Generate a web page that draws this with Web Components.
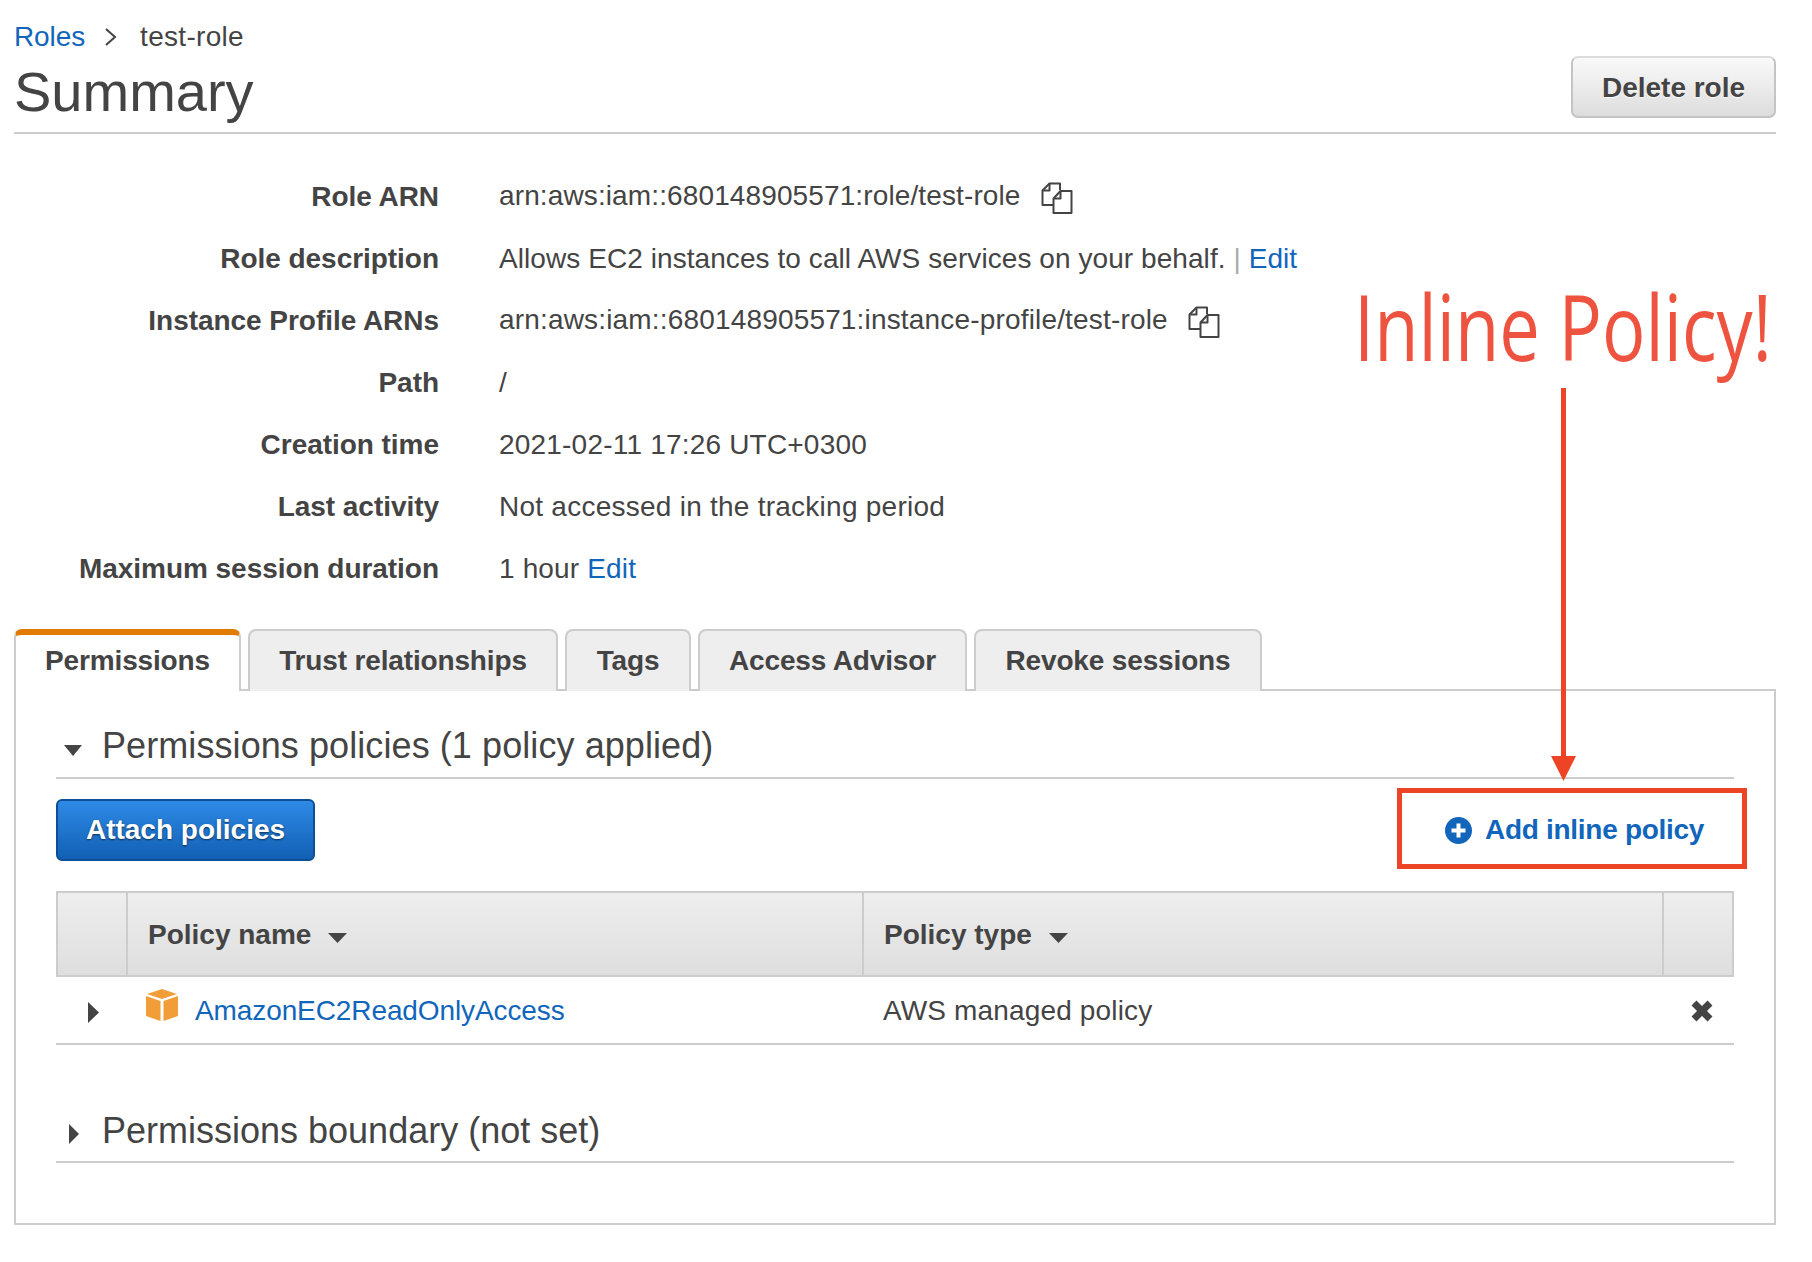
<!DOCTYPE html>
<html>
<head>
<meta charset="utf-8">
<title>Summary</title>
<style>
    html, body { margin: 0; background: #fff; }
    body { font: 28px "Liberation Sans", Arial, sans-serif; color: #444; }
</style>
</head>
<body>
<role-page>
    <page-header slot="header" role-name="test-role"></page-header>
    <info-list slot="info">
        <info-row label="Role ARN" spacing=".12">arn:aws:iam::680148905571:role/test-role<copy-icon></copy-icon></info-row>
        <info-row label="Role description" spacing=".07">Allows EC2 instances to call AWS services on your behalf. <span style="color:#aaa">|</span> <a href="#" style="color:#1166bb;text-decoration:none">Edit</a></info-row>
        <info-row label="Instance Profile ARNs" spacing=".17">arn:aws:iam::680148905571:instance-profile/test-role<copy-icon></copy-icon></info-row>
        <info-row label="Path">/</info-row>
        <info-row label="Creation time" spacing=".2">2021-02-11 17:26 UTC+0300</info-row>
        <info-row label="Last activity" spacing=".25">Not accessed in the tracking period</info-row>
        <info-row label="Maximum session duration">1 hour <a href="#" style="color:#1166bb;text-decoration:none">Edit</a></info-row>
    </info-list>
    <tab-bar slot="tabs"></tab-bar>
    <tab-panel slot="panel">
        <policy-section title="Permissions policies (1 policy applied)" open></policy-section>
        <policy-toolbar></policy-toolbar>
        <policy-table></policy-table>
        <policy-section class="boundary" title="Permissions boundary (not set)"></policy-section>
    </tab-panel>
    <inline-callout slot="callout"></inline-callout>
</role-page>

<script>
class RolePage extends HTMLElement {
    constructor() {
        super();
        this.attachShadow({ mode: 'open' });
        this.shadowRoot.innerHTML = `
            <style>
                :host { display: block; position: relative; height: 1262px; box-sizing: border-box; padding: 0 36px 0 14px; overflow: hidden; }
                .tabs-wrap { margin-top: 29px; }
            </style>
            <slot name="header"></slot>
            <slot name="info"></slot>
            <div class="tabs-wrap"><slot name="tabs"></slot><slot name="panel"></slot></div>
            <slot name="callout"></slot>
        `;
    }
}

class PageHeader extends HTMLElement {
    constructor() {
        super();
        this.attachShadow({ mode: 'open' });
    }

    connectedCallback() {
        const name = this.getAttribute('role-name');
        this.shadowRoot.innerHTML = `
            <style>
                :host { display: block; height: 132px; border-bottom: 2px solid #ccc; }
                .crumbs { display: flex; align-items: center; height: 36px; padding-top: 19px; line-height: 36px; }
                .crumbs a { color: #1166bb; text-decoration: none; letter-spacing: -.1px; }
                .crumbs span { letter-spacing: .3px; }
                .crumbs svg { margin: 0 22px 0 19px; display: block; }
                .title { display: flex; justify-content: space-between; align-items: flex-start; }
                h1 { margin: 5px 0 0; font-size: 56px; font-weight: 400; line-height: 64px; }
                button {
                    width: 205px; height: 62px; margin-top: 1px; box-sizing: border-box; padding: 2px 0 0;
                    font: bold 28px "Liberation Sans", Arial, sans-serif; color: #444;
                    text-shadow: 0 1px 1px rgba(255,255,255,.8);
                    border: 2px solid #c4c4c4; border-top-color: #dcdcdc; border-radius: 7px;
                    background: linear-gradient(#f9f9f9, #dddddd);
                }
            </style>
            <div class="crumbs">
                <a href="#">Roles</a>
                <svg width="14" height="20" viewBox="0 0 14 20"><path d="M2 2l9 8-9 8" fill="none" stroke="#444" stroke-width="2"/></svg>
                <span>${name}</span>
            </div>
            <div class="title">
                <h1>Summary</h1>
                <button>Delete role</button>
            </div>
        `;
    }
}

class InfoList extends HTMLElement {
    constructor() {
        super();
        this.attachShadow({ mode: 'open' });
        this.shadowRoot.innerHTML = `
            <style>:host { display: block; padding-top: 32px; }</style>
            <slot></slot>
        `;
    }
}

class InfoRow extends HTMLElement {
    constructor() {
        super();
        this.attachShadow({ mode: 'open' });
    }

    connectedCallback() {
        const spacing = this.getAttribute('spacing') || '.15';
        this.shadowRoot.innerHTML = `
            <style>
                :host { display: grid; grid-template-columns: 425px 1fr; column-gap: 60px; height: 62px; align-items: center; }
                .label { font-weight: bold; text-align: right; letter-spacing: -.04px; }
                .value { letter-spacing: ${spacing}px; }
            </style>
            <div class="label">${this.getAttribute('label')}</div>
            <div class="value"><slot></slot></div>
        `;
    }
}

class CopyIcon extends HTMLElement {
    constructor() {
        super();
        this.attachShadow({ mode: 'open' });
        this.shadowRoot.innerHTML = `
            <style>:host { display: inline-block; width: 32px; height: 32px; margin-left: 20px; vertical-align: -9px; }</style>
            <svg width="32" height="32" viewBox="0 0 32 32" fill="none" stroke="#444" stroke-width="2" stroke-linejoin="round">
                <path d="M13 23H1.500V8.500L8.500 1.500H19V8"/>
                <path d="M8.500 1.500V8.500H1.500"/>
                <path d="M12.500 16.500L19.500 9H30.500V31H12.500Z"/>
                <path d="M19.500 9V16.500H12.500"/>
            </svg>
        `;
    }
}

class TabBar extends HTMLElement {
    constructor() {
        super();
        this.attachShadow({ mode: 'open' });
        const tabs = [['Permissions', 227], ['Trust relationships', 310], ['Tags', 126], ['Access Advisor', 269], ['Revoke sessions', 288]];
        this.shadowRoot.innerHTML = `
            <style>
                :host { display: flex; gap: 7px; height: 62px; position: relative; z-index: 1; margin-bottom: -2px; letter-spacing: -.15px; }
                .tab {
                    box-sizing: border-box; height: 62px; font-weight: bold; text-align: center;
                    line-height: 59px; background: #eee; border: 2px solid #ccc; border-bottom: 0;
                    border-radius: 8px 8px 0 0;
                }
                .tab.active {
                    background: #fff; border-top: 6px solid #e07b00; line-height: 51px;
                }
            </style>
            ${tabs.map((t, i) => `<div class="tab${i === 0 ? ' active' : ''}" style="width:${t[1]}px">${t[0]}</div>`).join('')}
        `;
    }
}

class TabPanel extends HTMLElement {
    constructor() {
        super();
        this.attachShadow({ mode: 'open' });
        this.shadowRoot.innerHTML = `
            <style>:host { display: block; height: 536px; box-sizing: border-box; border: 2px solid #ccc; padding: 0 40px 0 40px; }</style>
            <slot></slot>
        `;
    }
}

class PolicySection extends HTMLElement {
    constructor() {
        super();
        this.attachShadow({ mode: 'open' });
    }

    connectedCallback() {
        const open = this.hasAttribute('open');
        const caret = open
            ? '<svg width="18" height="12" viewBox="0 0 18 12"><path d="M0 0h18L9 11z" fill="#444"/></svg>'
            : '<svg width="18" height="22" viewBox="0 0 18 22"><path d="M5 1l10 10L5 21z" fill="#444"/></svg>';
        const top = open ? 32 : 62;
        this.shadowRoot.innerHTML = `
            <style>
                :host { display: block; padding-top: ${top}px; }
                .head { display: flex; align-items: center; height: ${open ? 46 : 48}px; padding-bottom: ${open ? 8 : 6}px; border-bottom: 2px solid #ccc; font-size: 36px; }
                svg { margin-left: 8px; margin-top: ${open ? 10 : 6}px; flex: none; }
                span { margin-left: 20px; }
            </style>
            <div class="head">${caret}<span style="letter-spacing:${open ? .08 : 0}px">${this.getAttribute('title')}</span></div>
        `;
    }
}

class PolicyToolbar extends HTMLElement {
    constructor() {
        super();
        this.attachShadow({ mode: 'open' });
        this.shadowRoot.innerHTML = `
            <style>
                :host { display: flex; justify-content: space-between; align-items: center; height: 112px; box-sizing: border-box; padding-bottom: 10px; }
                button {
                    width: 259px; height: 62px; box-sizing: border-box; padding: 0;
                    font: bold 28px "Liberation Sans", Arial, sans-serif; color: #fff;
                    text-shadow: 0 1px 2px rgba(0,0,0,.6);
                    border: 2px solid #0d4f96; border-radius: 6px;
                    background: linear-gradient(#2e8ae6, #1160b4);
                }
                a { display: flex; align-items: center; gap: 13px; color: #1166bb; font-weight: bold; text-decoration: none; margin-right: 30px; letter-spacing: -.3px; }
                svg { display: block; margin-left: -1px; }
            </style>
            <button>Attach policies</button>
            <a href="#">
                <svg width="27" height="27" viewBox="0 0 27 27"><circle cx="13.500" cy="13.500" r="13.500" fill="#1166bb"/><path d="M13.500 6.500v14M6.500 13.500h14" stroke="#fff" stroke-width="4"/></svg>
                Add inline policy
            </a>
        `;
    }
}

class PolicyTable extends HTMLElement {
    constructor() {
        super();
        this.attachShadow({ mode: 'open' });
        const sortCaret = '<svg width="19" height="10" viewBox="0 0 19 10"><path d="M0 0h19L9.500 10z" fill="#444"/></svg>';
        this.shadowRoot.innerHTML = `
            <style>
                :host { display: block; }
                .row { display: grid; grid-template-columns: 70px 736px 800px 1fr; }
                .head {
                    height: 86px; box-sizing: border-box; border: 2px solid #ccc;
                    grid-template-columns: 68px 736px 800px 1fr;
                    background: linear-gradient(#eeeeee, #dedede); font-weight: bold;
                }
                .head > div { display: flex; align-items: center; gap: 17px; padding: 2px 0 0 20px; border-left: 2px solid #ccc; }
                .head > div:first-child { border-left: 0; padding: 0; }
                .head svg { margin-top: 6px; }
                .body { height: 68px; box-sizing: border-box; padding-top: 2px; border-bottom: 2px solid #ccc; align-items: center; }
                .body > div { display: flex; align-items: center; }
                .name { padding-left: 20px; letter-spacing: -.1px; }
                .name a { color: #1166bb; text-decoration: none; margin-left: 17px; }
                .type { padding-left: 21px; letter-spacing: .15px; }
                .box { margin-top: -12px; }
                .arrow { padding-left: 30px; margin-top: 2px; }
                .del { padding-left: 28px; }
            </style>
            <div class="row head">
                <div></div>
                <div>Policy name ${sortCaret}</div>
                <div>Policy type ${sortCaret}</div>
                <div></div>
            </div>
            <div class="row body">
                <div class="arrow"><svg width="14" height="21" viewBox="0 0 14 21"><path d="M2 0l11 10.500L2 21z" fill="#444"/></svg></div>
                <div class="name">
                    <svg class="box" width="32" height="32" viewBox="0 0 32 32">
                        <path d="M16 0L31 5 16 10 1 5z" fill="#f19e38"/>
                        <path d="M0 7l14.500 5V32L0 27z" fill="#f19e38"/>
                        <path d="M32 7l-14.500 5V32L32 27z" fill="#f19e38"/>
                    </svg>
                    <a href="#">AmazonEC2ReadOnlyAccess</a>
                </div>
                <div class="type">AWS managed policy</div>
                <div class="del"><svg width="24" height="24" viewBox="0 0 24 24"><path d="M4 4l16 16M20 4L4 20" stroke="#444" stroke-width="7"/></svg></div>
            </div>
        `;
    }
}

class InlineCallout extends HTMLElement {
    constructor() {
        super();
        this.attachShadow({ mode: 'open' });
        this.shadowRoot.innerHTML = `
            <style>
                :host { display: contents; }
                .text {
                    position: absolute; left: 1354px; top: 267px; white-space: nowrap;
                    font: 500 92px/118px "Open Sans", sans-serif; color: #ee5340;
                    transform: scaleX(.785); transform-origin: left top;
                }
                .line { position: absolute; left: 1561px; top: 388px; width: 5px; height: 370px; background: #ee4426; }
                svg { position: absolute; left: 1551px; top: 756px; }
                .box { position: absolute; left: 1397px; top: 788px; width: 350px; height: 81px; box-sizing: border-box; border: 5px solid #ee4426; }
            </style>
            <div class="text">Inline Policy!</div>
            <div class="line"></div>
            <svg width="25" height="25" viewBox="0 0 25 25"><path d="M0 0h25L12.500 25z" fill="#ee4426"/></svg>
            <div class="box"></div>
        `;
    }
}

customElements.define('role-page', RolePage);
customElements.define('page-header', PageHeader);
customElements.define('info-list', InfoList);
customElements.define('info-row', InfoRow);
customElements.define('copy-icon', CopyIcon);
customElements.define('tab-bar', TabBar);
customElements.define('tab-panel', TabPanel);
customElements.define('policy-section', PolicySection);
customElements.define('policy-toolbar', PolicyToolbar);
customElements.define('policy-table', PolicyTable);
customElements.define('inline-callout', InlineCallout);
</script>
</body>
</html>
